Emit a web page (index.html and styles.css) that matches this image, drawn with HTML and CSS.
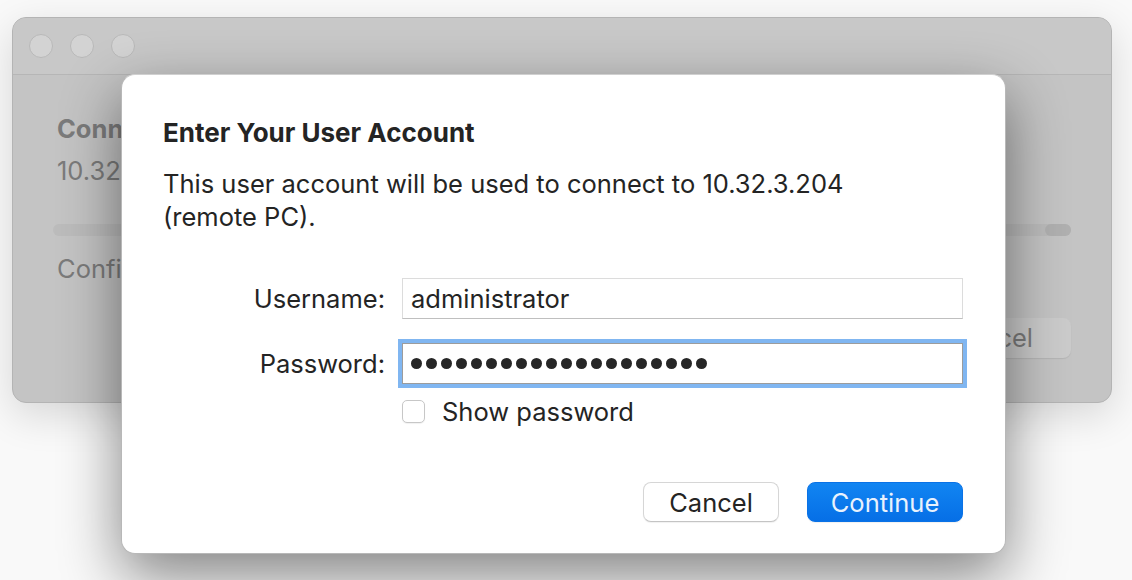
FILE: index.html
```html
<!DOCTYPE html>
<html lang="en">
<head>
<meta charset="utf-8" />
<title>Enter Your User Account</title>
<link rel="stylesheet" href="styles.css">
</head>
<body>

<div class="desk">
    <!-- the dimmed window behind the sheet -->
    <div class="window">
        <div class="titlebar">
            <span class="light"></span>
            <span class="light"></span>
            <span class="light"></span>
        </div>
        <div class="win-body">
            <h2>Connecting</h2>
            <p class="host">10.32.3.204</p>
            <div class="track"><span class="knob"></span></div>
            <p class="status">Configuring remote session...</p>
            <div class="win-actions">
                <span class="win-btn">Cancel</span>
            </div>
        </div>
    </div>

    <!-- the sheet -->
    <div class="sheet">
        <h1>Enter Your User Account</h1>
        <p class="lead">This user account will be used to connect to 10.32.3.204<br>(remote PC).</p>

        <div class="form">
            <label>Username:</label>
            <div class="field">administrator</div>

            <label>Password:</label>
            <div class="field focused">
                <span class="dot"></span><span class="dot"></span><span class="dot"></span><span class="dot"></span><span class="dot"></span>
                <span class="dot"></span><span class="dot"></span><span class="dot"></span><span class="dot"></span><span class="dot"></span>
                <span class="dot"></span><span class="dot"></span><span class="dot"></span><span class="dot"></span><span class="dot"></span>
                <span class="dot"></span><span class="dot"></span><span class="dot"></span><span class="dot"></span><span class="dot"></span>
            </div>

            <span></span>
            <div class="check"><span class="box"></span>Show password</div>
        </div>

        <div class="actions">
            <button class="btn">Cancel</button>
            <button class="btn primary">Continue</button>
        </div>
    </div>
</div>

</body>
</html>
```

FILE: styles.css
```css
html, body {
    margin: 0;
    height: 100%;
}

body {
    background: #f9f9f9;
    font-family: "Inter", "Liberation Sans", sans-serif;
    overflow: hidden;
}

.desk {
    position: relative;
    width: 1132px;
    height: 580px;
}

/* background window */

.window {
    position: absolute;
    left: 12px;
    top: 17px;
    width: 1098px;
    height: 384px;
    background: #c4c4c4;
    border: 1px solid #b4b4b4;
    border-radius: 14px;
    box-shadow: 0 12px 40px rgba(0, 0, 0, 0.14);
    overflow: hidden;
}

.titlebar {
    display: flex;
    align-items: center;
    gap: 17px;
    height: 56px;
    padding-left: 16px;
    background: #c8c8c8;
    border-bottom: 1px solid #b6b6b6;
}

.light {
    width: 22px;
    height: 22px;
    border-radius: 50%;
    background: #d3d3d3;
    border: 1px solid #b9b9b9;
}

.win-body {
    padding: 0 40px;
    color: #7b7b7b;
    font-size: 25.5px;
}

.win-body h2 {
    margin: 40px 0 0 4px;
    font-size: 25.5px;
    line-height: 28px;
}

.win-body p {
    margin: 0 0 0 4px;
    line-height: 28px;
}

.win-body p.host {
    margin-top: 14px;
}

.track {
    display: flex;
    justify-content: flex-end;
    height: 12px;
    margin-top: 39px;
    border-radius: 6px;
    background: #bcbcbc;
}

.knob {
    width: 26px;
    border-radius: 6px;
    background: #b0b0b0;
}

.win-body p.status {
    margin-top: 19px;
}

.win-actions {
    display: flex;
    justify-content: flex-end;
    margin-top: 35px;
}

.win-btn {
    height: 40px;
    padding: 0 38px;
    line-height: 40px;
    border-radius: 8px;
    background: #cbcbcb;
    box-shadow: 0 1px 1px rgba(0, 0, 0, 0.08);
}

/* sheet */

.sheet {
    position: absolute;
    left: 121px;
    top: 74px;
    width: 800px;
    height: 403px;
    padding: 44px 42px 31px 41px;
    background: #fff;
    border: 1px solid #b8b8b8;
    border-top-color: #d0d0d0;
    border-radius: 14px;
    box-shadow: 0 22px 60px rgba(0, 0, 0, 0.48);
    display: flex;
    flex-direction: column;
    color: #242424;
}

.sheet h1 {
    margin: 0;
    font-size: 26px;
    line-height: 28px;
    font-weight: 700;
}

.sheet p.lead {
    margin: 20px 0 0;
    font-size: 25.5px;
    line-height: 33px;
}

.form {
    display: grid;
    grid-template-columns: 222px 561px;
    column-gap: 17px;
    row-gap: 24px;
    align-items: center;
    margin-top: 45px;
    font-size: 25.5px;
}

.form label {
    text-align: right;
}

.field {
    display: flex;
    align-items: center;
    gap: 4px;
    height: 39px;
    padding-left: 8px;
    border: 1px solid #dcdcdc;
    border-bottom-color: #bfbfbf;
    line-height: 39px;
}

.field.focused {
    border-color: #9c9c9c;
    outline: 4px solid #80b6f1;
}

.dot {
    width: 11px;
    height: 11px;
    border-radius: 50%;
    background: #262626;
}

.check {
    display: flex;
    align-items: center;
    gap: 17px;
    height: 24px;
    margin-top: -9px;
}

.check .box {
    width: 21px;
    height: 21px;
    border: 1px solid #c7c7c7;
    border-radius: 5px;
    background: #fff;
    box-shadow: 0 1px 1px rgba(0, 0, 0, 0.06);
}

.actions {
    display: flex;
    justify-content: flex-end;
    gap: 28px;
    margin-top: auto;
}

.btn {
    height: 40px;
    padding: 0;
    width: 136px;
    font-family: inherit;
    font-size: 25.5px;
    color: #242424;
    background: #fff;
    border: 1px solid #d6d6d6;
    border-bottom-color: #c4c4c4;
    border-radius: 8px;
    box-shadow: 0 1px 1px rgba(0, 0, 0, 0.06);
}

.btn.primary {
    width: 156px;
    color: #e9f2fd;
    background: linear-gradient(#1185f2, #066fe6);
    border-color: #0a72e6;
}
```
